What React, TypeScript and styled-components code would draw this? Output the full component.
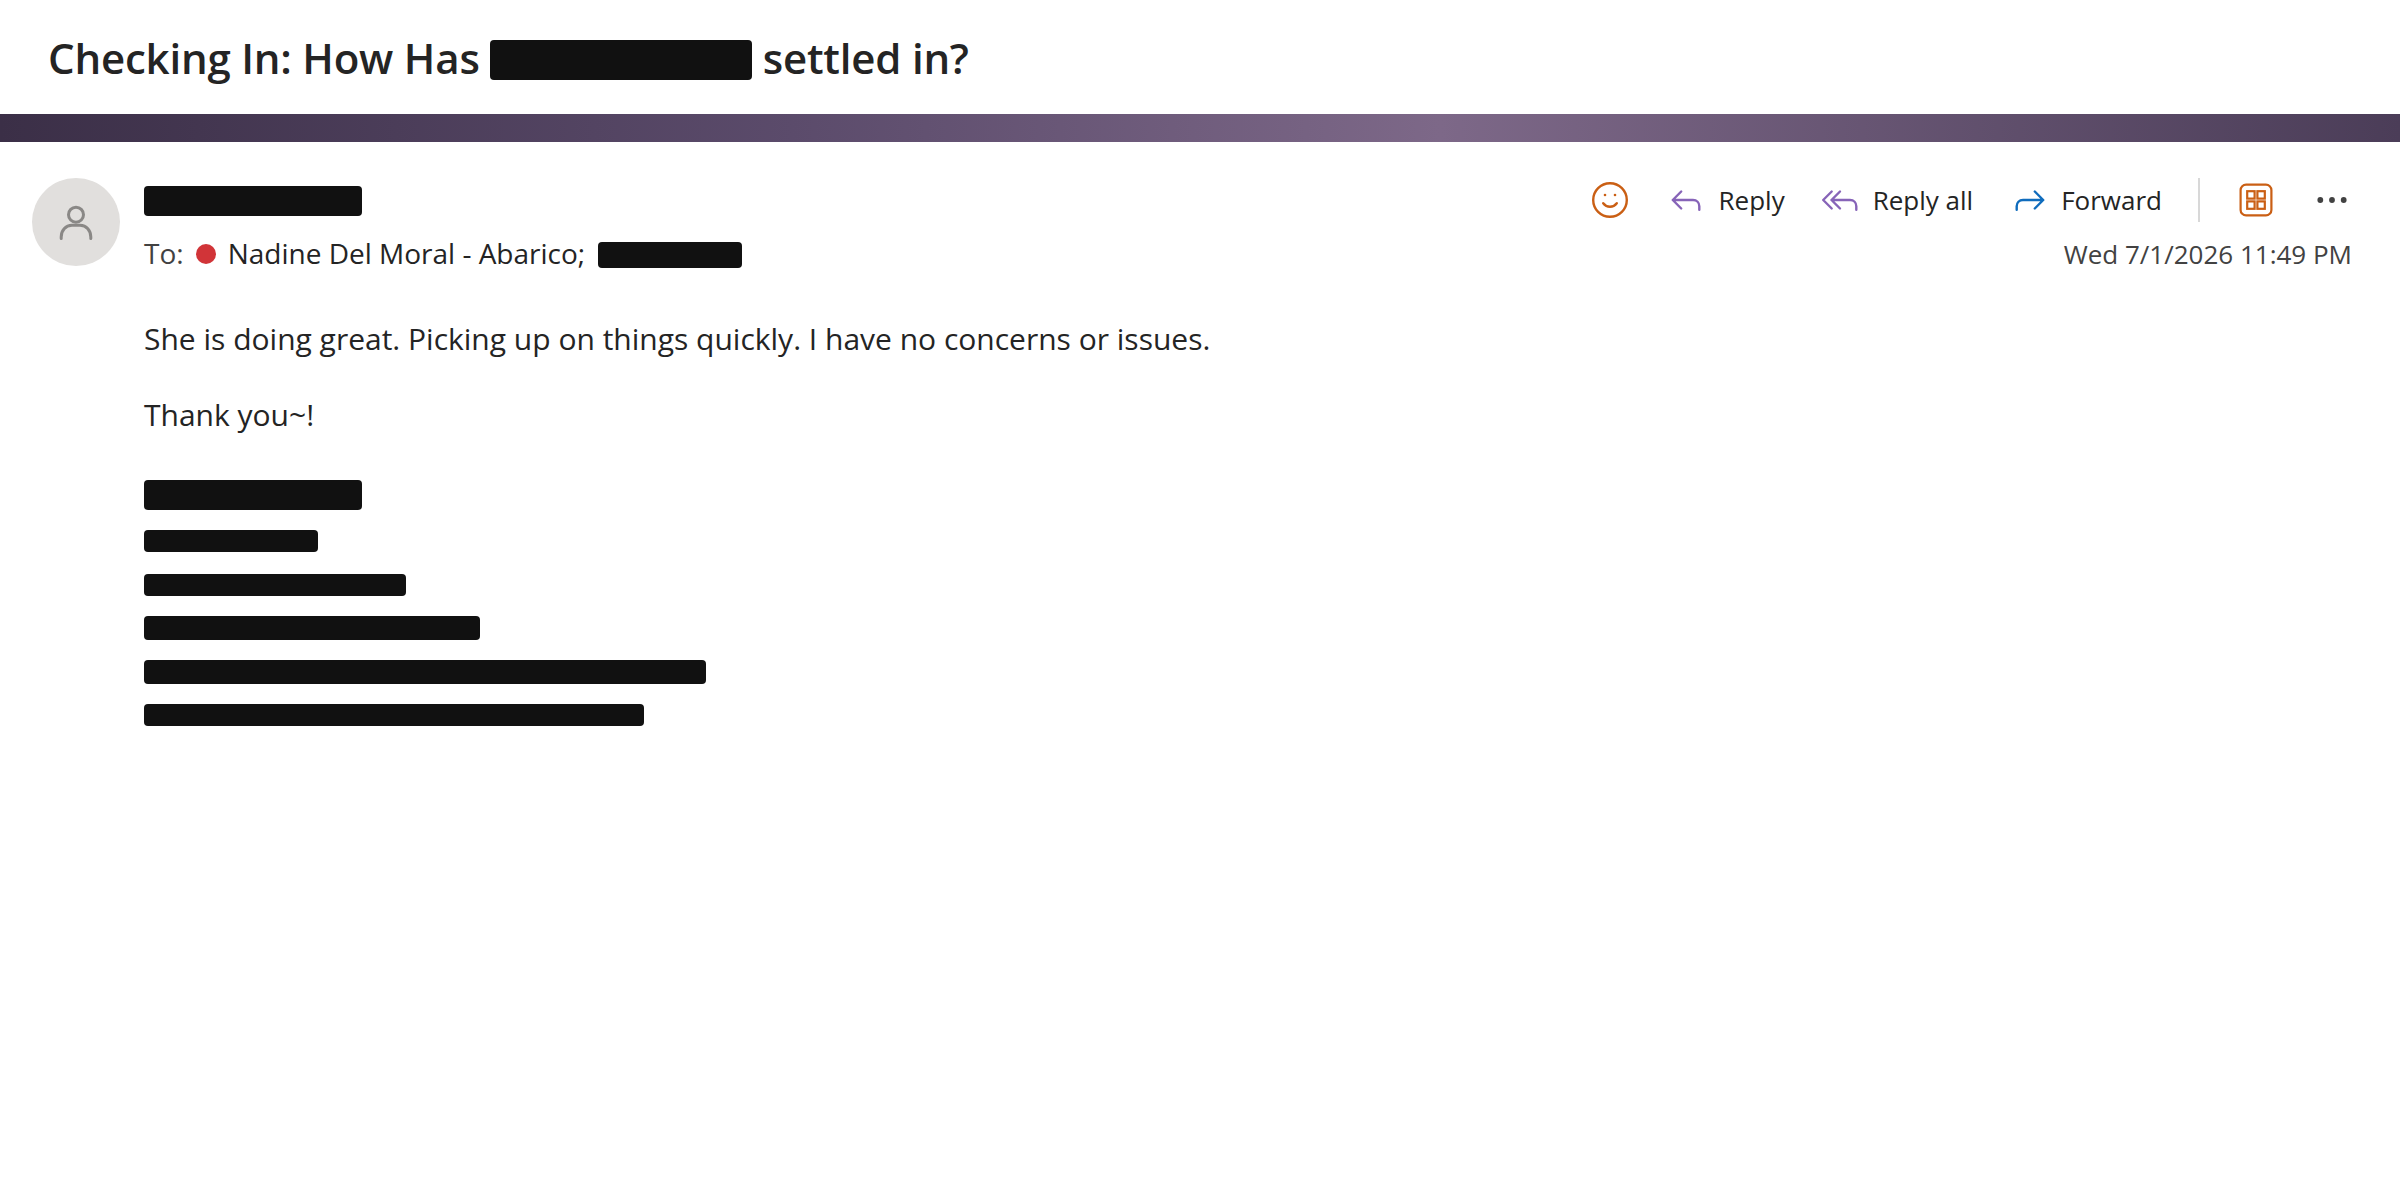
import React from "react";
import styled, { createGlobalStyle } from "styled-components";

const GlobalStyle = createGlobalStyle`
  *, *::before, *::after { box-sizing: border-box; }
  body {
    margin: 0;
    background: #fff;
    color: #242424;
    font-family: "Open Sans", "Noto Sans", sans-serif;
  }
`;

const Page = styled.main`
  min-height: 1200px;
  background: #fff;
`;

const SubjectBar = styled.header`
  height: 114px;
  padding: 0 48px;
  display: flex;
  align-items: center;
`;

const Subject = styled.h1`
  margin: 0;
  padding-top: 2px;
  display: flex;
  align-items: center;
  gap: 10.5px;
  font-size: 42px;
  font-weight: 600;
  line-height: 56px;
  letter-spacing: -0.2px;
  white-space: nowrap;
`;

const Redacted = styled.span<{ $w: number; $h: number; $drop?: number }>`
  display: block;
  flex: none;
  width: ${(p) => p.$w}px;
  height: ${(p) => p.$h}px;
  margin-top: ${(p) => p.$drop ?? 0}px;
  border-radius: 4px;
  background: #111;
`;

const ThemeStrip = styled.div`
  height: 28px;
  background: linear-gradient(90deg, #3b2f47 0%, #5b4b6b 33%, #7d6888 60%, #4b3d58 100%);
`;

const Message = styled.article`
  display: flex;
  gap: 24px;
  padding: 36px 48px 0 32px;
`;

const Avatar = styled.div`
  width: 88px;
  height: 88px;
  flex: none;
  border-radius: 50%;
  background: #e1dfdd;
  display: flex;
  align-items: center;
  justify-content: center;
`;

const Content = styled.div`
  flex: 1;
  min-width: 0;
`;

const TopRow = styled.div`
  height: 44px;
  display: flex;
  align-items: center;
  justify-content: space-between;
`;

const Sender = styled.div`
  padding-top: 2px;
`;

const Toolbar = styled.div`
  display: flex;
  align-items: center;
  padding-right: 2px;
`;

const Action = styled.button<{ $before?: number; $gap?: number }>`
  margin: 0 0 0 ${(p) => p.$before ?? 0}px;
  padding: 0;
  border: 0;
  background: none;
  display: flex;
  align-items: center;
  gap: ${(p) => p.$gap ?? 16}px;
  color: #242424;
  font: 400 26px/44px "Open Sans", "Noto Sans", sans-serif;
  white-space: nowrap;
`;

const Divider = styled.span`
  width: 2px;
  height: 44px;
  margin-left: 36px;
  background: #d8d8d8;
`;

const MetaRow = styled.div`
  height: 40px;
  margin-top: 12px;
  display: flex;
  align-items: center;
  justify-content: space-between;
`;

const Recipients = styled.div`
  display: flex;
  align-items: center;
  gap: 12px;
  font-size: 28px;
  line-height: 38px;
  white-space: nowrap;
`;

const ToLabel = styled.span`
  padding-bottom: 2px;
  color: #424242;
`;

const RecipientName = styled.span`
  padding: 0 1px 2px 0;
`;

const Presence = styled.span`
  width: 20px;
  height: 20px;
  border-radius: 50%;
  background: #d13438;
`;

const Timestamp = styled.time`
  font-size: 26px;
  line-height: 40px;
  color: #424242;
`;

const Body = styled.section`
  padding-top: 41px;
  font-size: 30px;
  line-height: 48px;
`;

const Paragraph = styled.p`
  margin: 0 0 28px;
`;

const Signature = styled.div`
  margin-top: 41px;
  display: flex;
  flex-direction: column;
  gap: 20px;
`;

const SignatureLine = styled(Redacted)<{ $after?: number }>`
  margin-bottom: ${(p) => p.$after ?? 0}px;
`;

const Icon = styled.svg<{ $weight?: number }>`
  display: block;
  flex: none;
  fill: none;
  stroke-width: ${(p) => p.$weight ?? 2.4};
  stroke-linecap: round;
  stroke-linejoin: round;
`;

const ORANGE = "#ca5f14";
const PURPLE = "#8764b8";
const BLUE = "#0f6cbd";

const PersonIcon = () => (
  <Icon width="40" height="40" viewBox="0 0 40 40" stroke="#8a8886" $weight={3}>
    <circle cx="20" cy="12.700" r="7.500" />
    <path d="M5.200 36.500V35c0-6.500 4.300-11.700 10.800-11.700h8c6.500 0 10.800 5.200 10.800 11.700v1.500" />
  </Icon>
);

const SmileIcon = () => (
  <Icon width="36" height="36" viewBox="0 0 36 36" stroke={ORANGE}>
    <circle cx="18" cy="18" r="16.800" />
    <path d="M11.200 21.200c3.500 4.700 10.100 4.700 13.600 0" />
    <circle cx="13" cy="13" r="1.300" fill={ORANGE} stroke="none" />
    <circle cx="23" cy="13" r="1.300" fill={ORANGE} stroke="none" />
  </Icon>
);

const ReplyIcon = () => (
  <Icon width="36" height="36" viewBox="0 0 36 36" stroke={PURPLE}>
    <path d="M13.200 9.500L4.800 18l8.400 8.500M4.800 18H25c3.800 0 6.300 2.500 6.300 6.300V27.800" />
  </Icon>
);

const ReplyAllIcon = () => (
  <Icon width="40" height="36" viewBox="0 0 40 36" stroke={PURPLE}>
    <path d="M12.700 9.500L4.200 18l8.500 8.500M21 9.500L12.500 18l8.500 8.500M12.500 18H31c3.800 0 6.300 2.500 6.300 6.300V27.800" />
  </Icon>
);

const ForwardIcon = () => (
  <Icon width="36" height="36" viewBox="0 0 36 36" stroke={BLUE}>
    <path d="M22.800 9.500l8.400 8.500-8.400 8.500M31.200 18H11c-3.800 0-6.300 2.500-6.300 6.300V27.800" />
  </Icon>
);

const AppsIcon = () => (
  <Icon width="36" height="36" viewBox="0 0 36 36" stroke={ORANGE} $weight={2.2}>
    <rect x="2.600" y="2.600" width="30.800" height="30.800" rx="5.500" />
    <g strokeLinejoin="miter">
      <rect x="9.200" y="9.200" width="7.400" height="7.400" />
      <rect x="19.400" y="9.200" width="7.400" height="7.400" />
      <rect x="9.200" y="19.400" width="7.400" height="7.400" />
      <rect x="19.400" y="19.400" width="7.400" height="7.400" />
    </g>
  </Icon>
);

const MoreIcon = () => (
  <Icon width="36" height="36" viewBox="0 0 36 36">
    <g fill="#424242">
      <circle cx="6.300" cy="18" r="2.900" />
      <circle cx="18" cy="18" r="2.900" />
      <circle cx="29.700" cy="18" r="2.900" />
    </g>
  </Icon>
);

const signature = [
  { w: 218, h: 30 },
  { w: 174, h: 22, after: 2 },
  { w: 262, h: 22 },
  { w: 336, h: 24 },
  { w: 562, h: 24 },
  { w: 500, h: 22 },
];

export default function App() {
  return (
    <Page>
      <GlobalStyle />
      <SubjectBar>
        <Subject>
          <span>Checking In: How Has</span>
          <Redacted $w={262} $h={40} $drop={4} />
          <span>settled in?</span>
        </Subject>
      </SubjectBar>
      <ThemeStrip />
      <Message>
        <Avatar>
          <PersonIcon />
        </Avatar>
        <Content>
          <TopRow>
            <Sender>
              <Redacted $w={218} $h={30} />
            </Sender>
            <Toolbar>
              <Action aria-label="React">
                <SmileIcon />
              </Action>
              <Action $before={40} $gap={15}>
                <ReplyIcon />
                Reply
              </Action>
              <Action $before={34.5} $gap={13.5}>
                <ReplyAllIcon />
                Reply all
              </Action>
              <Action $before={39} $gap={13}>
                <ForwardIcon />
                Forward
              </Action>
              <Divider />
              <Action $before={38} aria-label="Apps">
                <AppsIcon />
              </Action>
              <Action $before={40} aria-label="More">
                <MoreIcon />
              </Action>
            </Toolbar>
          </TopRow>
          <MetaRow>
            <Recipients>
              <ToLabel>To:</ToLabel>
              <Presence />
              <RecipientName>Nadine Del Moral - Abarico;</RecipientName>
              <Redacted $w={144} $h={26} $drop={2} />
            </Recipients>
            <Timestamp>Wed 7/1/2026 11:49 PM</Timestamp>
          </MetaRow>
          <Body>
            <Paragraph>She is doing great. Picking up on things quickly. I have no concerns or issues.</Paragraph>
            <Paragraph>Thank you~!</Paragraph>
            <Signature>
              {signature.map((line, i) => (
                <SignatureLine key={i} $w={line.w} $h={line.h} $after={line.after} />
              ))}
            </Signature>
          </Body>
        </Content>
      </Message>
    </Page>
  );
}
